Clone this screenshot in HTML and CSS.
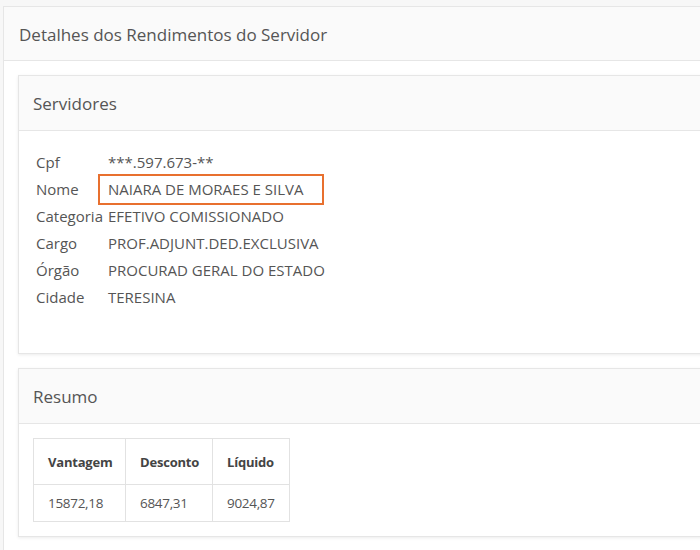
FILE: index.html
```html
<!DOCTYPE html>
<html lang="pt-BR">
<head>
    <meta charset="UTF-8">
    <meta name="viewport" content="width=device-width, initial-scale=1.0">
    <title>Detalhes dos Rendimentos do Servidor</title>
    <link rel="stylesheet" href="styles.css">
</head>
<body>
    <div class="panel outer">
        <div class="panel-heading">Detalhes dos Rendimentos do Servidor</div>
        <div class="panel-body">
            <div class="panel inner">
                <div class="panel-heading">Servidores</div>
                <div class="panel-body info">
                    <div class="row"><span class="label">Cpf</span><span class="value">***.597.673-**</span></div>
                    <div class="row"><span class="label">Nome</span><span class="value highlight">NAIARA DE MORAES E SILVA</span></div>
                    <div class="row"><span class="label">Categoria</span><span class="value">EFETIVO COMISSIONADO</span></div>
                    <div class="row"><span class="label">Cargo</span><span class="value">PROF.ADJUNT.DED.EXCLUSIVA</span></div>
                    <div class="row"><span class="label">Órgão</span><span class="value">PROCURAD GERAL DO ESTADO</span></div>
                    <div class="row"><span class="label">Cidade</span><span class="value">TERESINA</span></div>
                </div>
            </div>

            <div class="panel inner">
                <div class="panel-heading">Resumo</div>
                <div class="panel-body">
                    <table class="summary">
                        <colgroup>
                            <col class="col-vantagem">
                            <col class="col-desconto">
                            <col class="col-liquido">
                        </colgroup>
                        <tr>
                            <th>Vantagem</th>
                            <th>Desconto</th>
                            <th>Líquido</th>
                        </tr>
                        <tr>
                            <td>15872,18</td>
                            <td>6847,31</td>
                            <td>9024,87</td>
                        </tr>
                    </table>
                </div>
            </div>
        </div>
    </div>
</body>
</html>
```

FILE: styles.css
```css
body {
    font-family: "Open Sans", "Noto Sans", sans-serif;
    color: #555;
    background-color: #f7f7f7;
    margin: 0;
    padding: 6px 0 0 3px;
    height: 544px;
    overflow: hidden;
}

.panel {
    background-color: #fff;
    border: 1px solid #e6e6e6;
}
.panel-heading {
    background-color: #fafafa;
    border-bottom: 1px solid #e6e6e6;
    font-size: 17px;
    color: #555;
}

.outer {
    min-height: 560px;
    margin-right: -10px;
}
.outer > .panel-heading {
    height: 53px;
    line-height: 55px;
    padding-left: 15px;
}
.outer > .panel-body {
    padding: 14px 0 0 14px;
}

.inner {
    box-shadow: 0 1px 3px rgba(0,0,0,0.08);
    margin-bottom: 14px;
}
.inner > .panel-heading {
    height: 54px;
    line-height: 56px;
    padding-left: 14px;
}
.inner > .panel-body {
    padding: 14px;
}

.info.panel-body {
    padding: 18px 17px 42px;
}
.row {
    display: flex;
    height: 27px;
    line-height: 27px;
    font-size: 15px;
}
.label {
    width: 72px;
}
.highlight {
    border: 2px solid #e8702f;
    padding: 1px 19px 1px 8px;
    margin-left: -10px;
    line-height: 25px;
    margin-top: -2px;
    height: 25px;
}

.summary {
    border-collapse: collapse;
    table-layout: fixed;
    font-size: 14px;
}
.col-vantagem { width: 92px; }
.col-desconto { width: 87px; }
.col-liquido { width: 77px; }
.summary th,
.summary td {
    border: 1px solid #e2e2e2;
    text-align: left;
    padding: 8px 0 8px 14px;
    line-height: 20px;
    white-space: nowrap;
}
.summary td {
    font-size: 13.5px;
    letter-spacing: -0.3px;
}
.summary th {
    padding-top: 13px;
    padding-bottom: 12px;
    font-size: 13px;
    letter-spacing: -0.2px;
    font-weight: bold;
    color: #444;
}
```
